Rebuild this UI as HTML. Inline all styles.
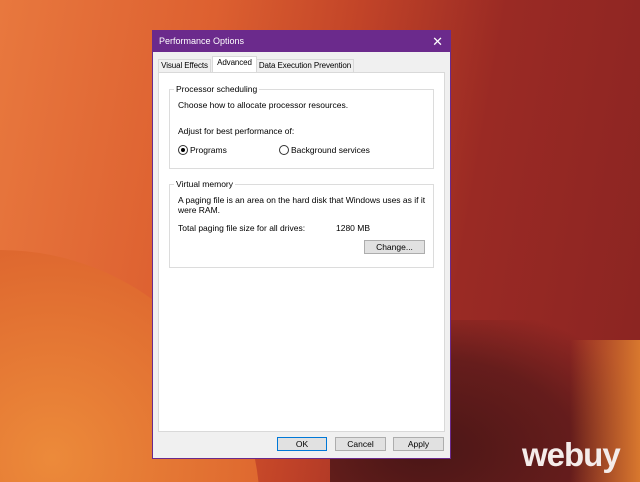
<!DOCTYPE html><html><head><style>
html,body{margin:0;width:640px;height:482px;overflow:hidden}
#w{position:relative;width:640px;height:482px;overflow:hidden;font-family:"Liberation Sans",sans-serif;
background:linear-gradient(100deg,#e8783e 0%,#dd6030 30%,#c24428 50%,#9a2a24 70%,#8a2422 100%);}
.bl{position:absolute;left:-260px;top:250px;width:520px;height:520px;border-radius:50%;background:radial-gradient(circle at 60% 40%,#ec8a3a,#d8582a 70%);}
.br{position:absolute;left:330px;top:320px;width:310px;height:162px;background:radial-gradient(ellipse at 30% 80%,#4a1616,rgba(90,26,26,.8) 50%,rgba(138,36,34,0) 80%);}
.rr{position:absolute;left:570px;top:340px;width:70px;height:142px;background:linear-gradient(90deg,rgba(200,90,40,0),#d8782e);}
.dlg{position:absolute;left:152px;top:30px;width:297px;height:427px;background:#f0f0f0;border:1px solid #6b2a8c;font-size:8.5px;color:#000}
.tb{height:21px;background:#6b2a8c;color:#fff;font-size:9px;line-height:21px;padding-left:6px;position:relative}
.tb span{position:absolute;right:7px;top:0;font-size:13px}
.tab{position:absolute;top:28px;height:12px;border:1px solid #d9d9d9;background:#f0f0f0;line-height:12px;font-size:8px;white-space:nowrap;text-align:center;letter-spacing:-.1px}
.pan{position:absolute;left:5px;top:41px;width:285px;height:358px;background:#fff;border:1px solid #d9d9d9}
.g{position:absolute;border:1px solid #dcdcdc;left:10px;width:263px}
.g .l{position:absolute;top:-6px;left:4px;background:#fff;padding:0 2px}
.t{position:absolute;white-space:nowrap}
.rad{display:inline-block;width:8px;height:8px;border:1px solid #333;border-radius:50%;vertical-align:-2px;margin-right:2px;position:relative;background:#fff}
.rad.on:after{content:"";position:absolute;left:2px;top:2px;width:4px;height:4px;border-radius:50%;background:#000}
.btn{position:absolute;height:12px;border:1px solid #adadad;background:#e1e1e1;text-align:center;line-height:12px;font-size:8.5px}
.logo{position:absolute;left:522px;top:436px;height:38px;line-height:38px;color:#f4ecea;font:bold 33px "Liberation Sans",sans-serif;letter-spacing:-1px}
</style></head><body><div id="w">
<div class="bl"></div><div class="br"></div><div class="rr"></div>
<div class="dlg">
<div class="tb">Performance Options<span>✕</span></div>
<div class="tab" style="left:5px;width:51px">Visual Effects</div>
<div class="tab" style="left:59px;top:25px;width:43px;height:15px;background:#fff;border-bottom:none;z-index:2">Advanced</div>
<div class="tab" style="left:103px;width:96px">Data Execution Prevention</div>
<div class="pan">
<div class="g" style="top:16px;height:78px"><span class="l">Processor scheduling</span>
<div class="t" style="left:8px;top:10px">Choose how to allocate processor resources.</div>
<div class="t" style="left:8px;top:36px">Adjust for best performance of:</div>
<div class="t" style="left:8px;top:55px"><span class="rad on"></span>Programs</div>
<div class="t" style="left:109px;top:55px"><span class="rad"></span>Background services</div>
</div>
<div class="g" style="top:111px;height:82px"><span class="l">Virtual memory</span>
<div class="t" style="left:8px;top:10px">A paging file is an area on the hard disk that Windows uses as if it<br>were RAM.</div>
<div class="t" style="left:8px;top:38px">Total paging file size for all drives:</div>
<div class="t" style="left:166px;top:38px">1280 MB</div>
<div class="btn" style="left:194px;top:55px;width:59px">Change...</div>
</div>
</div>
<div class="btn" style="left:124px;top:406px;width:48px;border-color:#0078d7">OK</div>
<div class="btn" style="left:182px;top:406px;width:49px">Cancel</div>
<div class="btn" style="left:240px;top:406px;width:49px">Apply</div>
</div>
<div class="logo">webuy</div>
</div></body></html>
